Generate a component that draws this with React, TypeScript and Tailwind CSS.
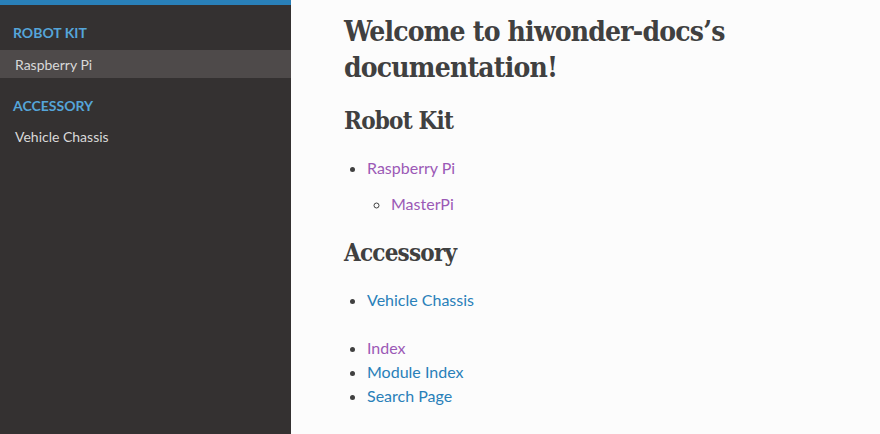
import React from "react";

const slab =
  "font-['Roboto_Slab','DejaVu_Serif',serif] [font-stretch:condensed] tracking-[-0.8px]";

// ─── Sidebar ─────────────────────────────────────────────────────────────────
function Sidebar() {
  return (
    <nav className="w-[291px] shrink-0 bg-[#343131] min-h-[434px]">
      <div className="h-[5px] bg-[#2980b9]" />
      <div className="pt-[19px]">
        <p className="px-[13px] text-[14px] leading-[18px] font-bold uppercase text-[#55a5d9]">
          Robot Kit
        </p>
        <div className="mt-[8px] h-[28px] bg-[#4e4a4a] px-[15px] flex items-center text-[14px] text-[#d9d9d9]">
          Raspberry Pi
        </div>
        <p className="mt-[19px] px-[13px] text-[14px] leading-[18px] font-bold uppercase text-[#55a5d9]">
          Accessory
        </p>
        <div className="mt-[7px] h-[28px] px-[15px] flex items-center text-[14px] text-[#d9d9d9]">
          Vehicle Chassis
        </div>
      </div>
    </nav>
  );
}

// ─── Main page ────────────────────────────────────────────────────────────────
export default function App() {
  return (
    <div className="flex min-h-[434px] font-['Lato',sans-serif] bg-[#fcfcfc] text-[#404040]">
      <Sidebar />
      <main className="flex-1 pl-[53px] pt-[14px]">
        <h1 className={`${slab} text-[28px] leading-[36px] font-bold`}>
          Welcome to hiwonder-docs’s
          <br />
          documentation!
        </h1>
        <h2 className={`${slab} mt-[20px] text-[24px] leading-[30px] font-bold`}>
          Robot Kit
        </h2>
        <ul className="mt-[20px] text-[16px] leading-[24px] list-disc pl-[23px]">
          <li>
            <span className="text-[#9b59b6]">Raspberry Pi</span>
            <ul className="list-[circle] pl-[24px] mt-[12px]">
              <li>
                <span className="text-[#9b59b6]">MasterPi</span>
              </li>
            </ul>
          </li>
        </ul>
        <h2 className={`${slab} mt-[22px] text-[24px] leading-[30px] font-bold`}>
          Accessory
        </h2>
        <ul className="mt-[20px] text-[16px] leading-[24px] list-disc pl-[23px]">
          <li>
            <span className="text-[#2980b9]">Vehicle Chassis</span>
          </li>
        </ul>
        <ul className="mt-[24px] text-[16px] leading-[24px] list-disc pl-[23px]">
          <li>
            <span className="text-[#9b59b6]">Index</span>
          </li>
          <li>
            <span className="text-[#2980b9]">Module Index</span>
          </li>
          <li>
            <span className="text-[#2980b9]">Search Page</span>
          </li>
        </ul>
      </main>
    </div>
  );
}
